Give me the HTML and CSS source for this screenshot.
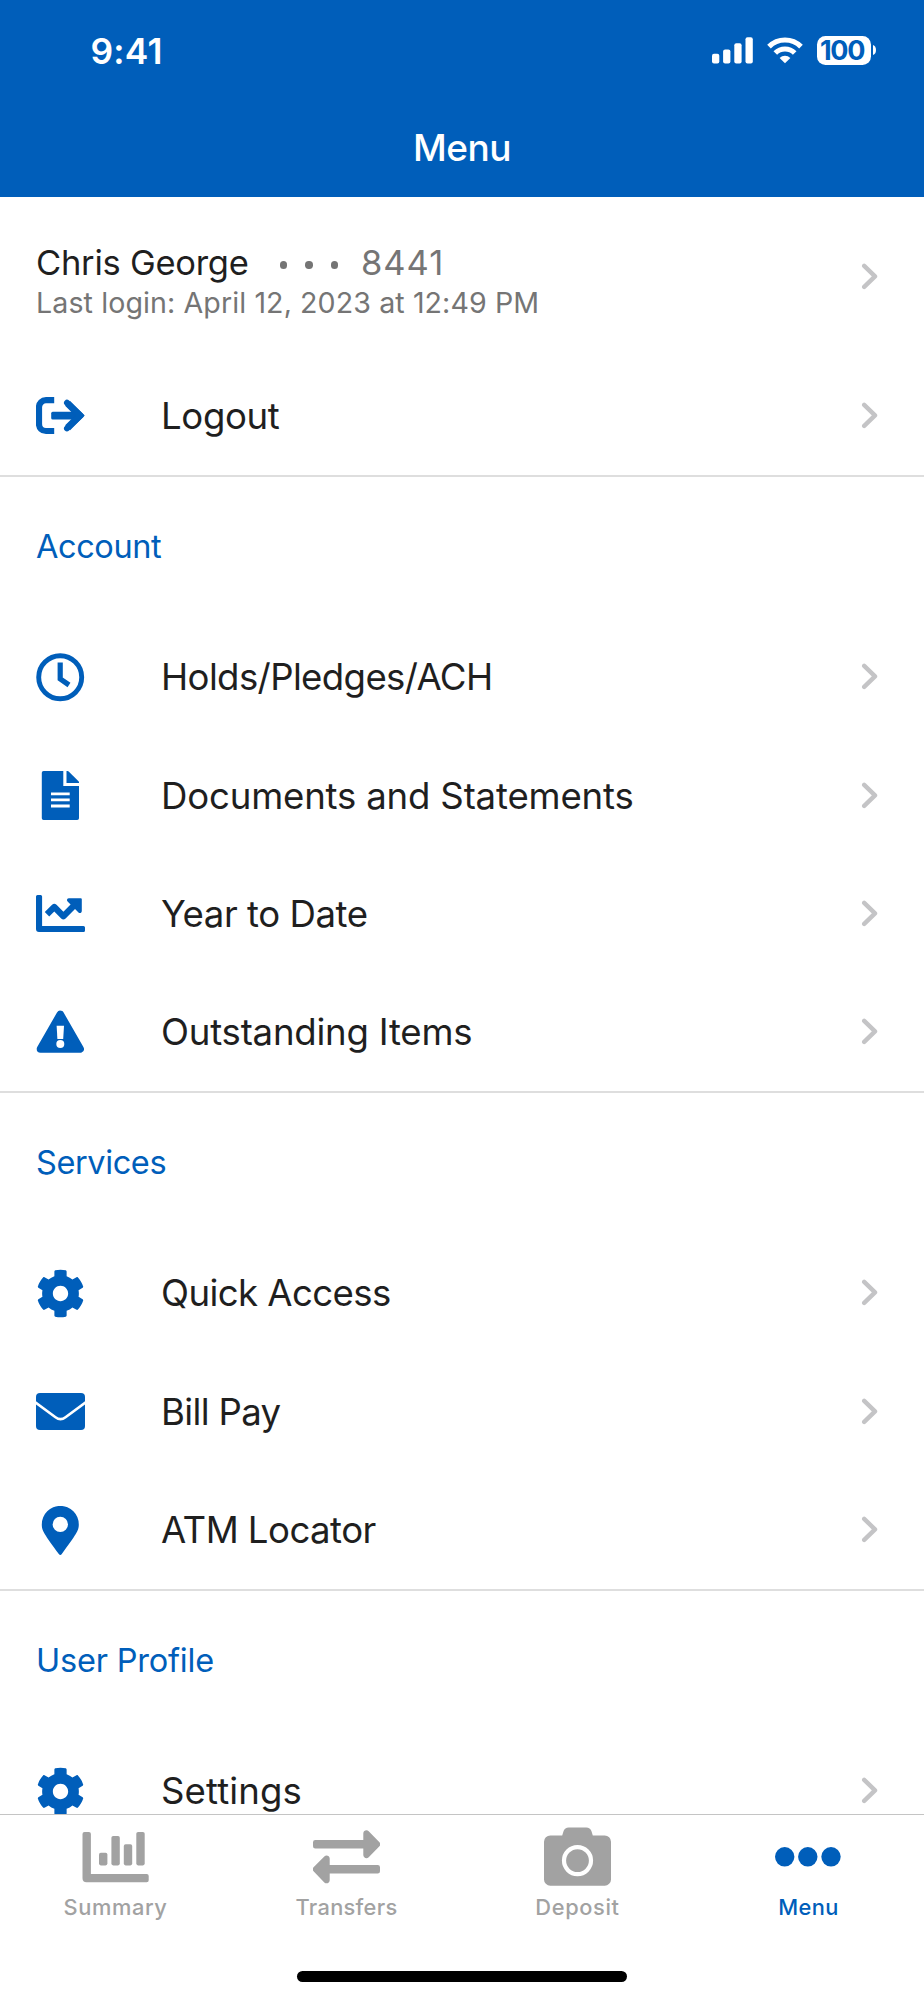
FILE: index.html
```html
<!DOCTYPE html>
<html lang="en">
<head>
<meta charset="utf-8">
<title>Menu</title>
<link rel="stylesheet" href="styles.css">
</head>
<body>
<svg class="defs" aria-hidden="true">
  <symbol id="chevron" viewBox="0 0 18 28"><path d="M3.2 2.9 14 13.4 3.2 23.9" fill="none" stroke="#c4c4c6" stroke-width="4.4" stroke-linecap="round" stroke-linejoin="round"/></symbol>
  <symbol id="gear" viewBox="0 0 512 512"><path fill="currentColor" d="M487.4 315.7l-42.6-24.6c4.3-23.2 4.3-47 0-70.2l42.6-24.6c4.9-2.8 7.1-8.6 5.5-14-11.1-35.6-30-67.8-54.7-94.6-3.8-4.1-10-5.1-14.8-2.3L380.8 110c-17.9-15.4-38.5-27.3-60.8-35.1V25.8c0-5.6-3.9-10.5-9.4-11.7-36.7-8.2-74.3-7.8-109.2 0-5.5 1.2-9.4 6.1-9.4 11.7V75c-22.2 7.9-42.8 19.8-60.8 35.1L88.7 85.5c-4.9-2.8-11-1.9-14.8 2.3-24.7 26.7-43.6 58.9-54.7 94.6-1.7 5.4.6 11.2 5.5 14L67.3 221c-4.3 23.2-4.3 47 0 70.2l-42.6 24.6c-4.9 2.8-7.1 8.6-5.5 14 11.1 35.6 30 67.8 54.7 94.6 3.8 4.1 10 5.1 14.8 2.3l42.6-24.6c17.9 15.4 38.5 27.3 60.8 35.1v49.2c0 5.6 3.9 10.5 9.4 11.7 36.7 8.2 74.3 7.8 109.2 0 5.5-1.2 9.4-6.1 9.4-11.7v-49.2c22.2-7.9 42.8-19.8 60.8-35.1l42.6 24.6c4.9 2.8 11 1.9 14.8-2.3 24.7-26.7 43.6-58.9 54.7-94.6 1.5-5.5-.7-11.3-5.6-14.1zM256 336c-44.1 0-80-35.9-80-80s35.9-80 80-80 80 35.9 80 80-35.9 80-80 80z"/></symbol>
</svg>
<div class="screen">
  <header class="header">
    <div class="status">
      <span class="time">9:41</span>
      <div class="indicators">
        <svg class="signal" viewBox="0 0 41 27" fill="#fff"><rect y="16.8" width="7.3" height="9.6" rx="2"/><rect x="11.1" y="12.4" width="7.3" height="14" rx="2"/><rect x="22.3" y="6.2" width="7.3" height="20.2" rx="2"/><rect x="33.5" y="0.2" width="7.3" height="26.2" rx="2"/></svg>
        <svg class="wifi" viewBox="0 0 36 27" fill="none" stroke="#fff" stroke-width="5.1"><path d="M2 9.6A22.6 22.6 0 0 1 34 9.6"/><path d="M8.3 16A13.7 13.7 0 0 1 27.7 16"/><path d="M18 26.3 12.6 20.9a8 8 0 0 1 10.8 0z" fill="#fff" stroke="none"/></svg>
        <span class="battery">100</span>
        <svg class="nub" viewBox="0 0 3 10"><path d="M0 0Q3 1.2 3 5T0 10Z" fill="#fff"/></svg>
      </div>
    </div>
    <h1 class="title">Menu</h1>
  </header>

  <main class="content">
    <section class="section">
      <div class="profile">
        <div class="identity">
          <div class="name-line"><span class="name">Chris George</span><span class="mask"><i class="dot"></i><i class="dot"></i><i class="dot"></i></span><span class="digits">8441</span></div>
          <div class="login">Last login: April 12, 2023 at 12:49 PM</div>
        </div>
        <svg class="chevron"><use href="#chevron"/></svg>
      </div>
      <div class="row">
        <svg class="icon" viewBox="0 0 49 49" fill="none" stroke="currentColor"><path d="M18.2 9.2H10a7 7 0 0 0-7 7v16.8a7 7 0 0 0 7 7h8.2" stroke-width="6.2"/><rect x="15.2" y="20.7" width="28" height="7.8" rx="1.5" fill="currentColor" stroke="none"/><path d="M31.6 12.4 43.8 24.6 31.6 36.8" stroke-width="7"/><path d="M31 11.8 44.6 24.6 31 37.4" stroke-width="6" stroke-linecap="round" stroke-linejoin="round"/></svg>
        <span class="label logout">Logout</span>
        <svg class="chevron"><use href="#chevron"/></svg>
      </div>
    </section>

    <section class="section">
      <h2 class="heading">Account</h2>
      <div class="row">
        <svg class="icon" viewBox="0 0 49 49" fill="none" stroke="currentColor"><circle cx="24.2" cy="24.3" r="21.5" stroke-width="4.9"/><path d="M24.2 9.6v16.4l8.8 6" stroke-width="5.2"/></svg>
        <span class="label holds">Holds/Pledges/ACH</span>
        <svg class="chevron"><use href="#chevron"/></svg>
      </div>
      <div class="row">
        <svg class="icon" viewBox="0 0 49 49" fill="currentColor"><path d="M7.6 0H27.3V15H43V47.2a1.8 1.8 0 0 1-1.8 1.8H7.6a1.8 1.8 0 0 1-1.8-1.8V1.8A1.8 1.8 0 0 1 7.6 0Z"/><path d="M30.5 0h1a1.8 1.8 0 0 1 1.2.5L42.5 10.3a1.8 1.8 0 0 1 .5 1.2v.5H30.5z"/><path d="M15 22.8H33.7M15 28.9H33.7M15 35H33.7" stroke="#fff" stroke-width="2.8"/></svg>
        <span class="label documents">Documents and Statements</span>
        <svg class="chevron"><use href="#chevron"/></svg>
      </div>
      <div class="row">
        <svg class="icon" viewBox="0 0 49 49" fill="currentColor"><path d="M1.5 6H4.6A1.5 1.5 0 0 1 6.1 7.5V36.9H47.5A1.5 1.5 0 0 1 49 38.4v3.1A1.5 1.5 0 0 1 47.5 43H3a3 3 0 0 1-3-3V7.5A1.5 1.5 0 0 1 1.5 6z"/><path d="M11 25.3 18.3 18 27.4 27.2 41 13.6" fill="none" stroke="currentColor" stroke-width="6.3" stroke-linejoin="round"/><path d="M33 9.2H44.8a1 1 0 0 1 1 1V22c0 2-2 2.7-3.3 1.4L31.6 12.5C30.3 11.2 31 9.2 33 9.2z"/></svg>
        <span class="label year">Year to Date</span>
        <svg class="chevron"><use href="#chevron"/></svg>
      </div>
      <div class="row">
        <svg class="icon" viewBox="0 0 49 49"><path d="M24.3 6.4 44.1 40.9H4.5z" fill="currentColor" stroke="currentColor" stroke-width="7.6" stroke-linejoin="round"/><path d="M20.6 17.7H28L27.2 31H21.4z" fill="#fff"/><circle cx="24.3" cy="36.1" r="4" fill="#fff"/></svg>
        <span class="label outstanding">Outstanding Items</span>
        <svg class="chevron"><use href="#chevron"/></svg>
      </div>
    </section>

    <section class="section">
      <h2 class="heading">Services</h2>
      <div class="row">
        <svg class="icon"><use href="#gear"/></svg>
        <span class="label quick">Quick Access</span>
        <svg class="chevron"><use href="#chevron"/></svg>
      </div>
      <div class="row">
        <svg class="icon" viewBox="0 0 49 49"><rect y="6" width="49" height="37" rx="4" fill="currentColor"/><path d="M-1 15.2 19.5 30.2Q24.5 34 29.5 30.2L50 15.2" fill="none" stroke="#fff" stroke-width="2.6"/></svg>
        <span class="label tight">Bill Pay</span>
        <svg class="chevron"><use href="#chevron"/></svg>
      </div>
      <div class="row">
        <svg class="icon" viewBox="0 0 49 49"><path d="M22.8 48C8.5 27.8 5.8 25.2 5.8 18.4a18.5 18.5 0 0 1 37 0C42.8 25.2 40.1 27.8 25.8 48a1.9 1.9 0 0 1-3 0z" fill="currentColor"/><circle cx="24.3" cy="18.4" r="7.7" fill="#fff"/></svg>
        <span class="label atm">ATM Locator</span>
        <svg class="chevron"><use href="#chevron"/></svg>
      </div>
    </section>

    <section class="section">
      <h2 class="heading profile-heading">User Profile</h2>
      <div class="row">
        <svg class="icon"><use href="#gear"/></svg>
        <span class="label settings">Settings</span>
        <svg class="chevron"><use href="#chevron"/></svg>
      </div>
    </section>
  </main>

  <footer class="footer">
    <nav class="tabs">
      <a class="tab"><svg class="tab-icon" viewBox="0 0 67 59" fill="currentColor"><path d="M2.5 5H6.9A2 2 0 0 1 8.9 7V47H64.7a2 2 0 0 1 2 2v4.3a2 2 0 0 1-2 2H4.5a4 4 0 0 1-4-4V7A2 2 0 0 1 2.5 5z"/><rect x="17" y="25.7" width="8.4" height="12.7" rx="1.8"/><rect x="29.4" y="9" width="8.4" height="29.4" rx="1.8"/><rect x="41.8" y="17.3" width="8.4" height="21.1" rx="1.8"/><rect x="54.3" y="5" width="8.4" height="33.4" rx="1.8"/></svg><span class="tab-label summary">Summary</span></a>
      <a class="tab"><svg class="tab-icon" viewBox="0 0 67 59" fill="currentColor"><path id="arrow" d="M2.3 13H50.3V6.4C50.3 3.6 53.7 2.2 55.7 4.2L66.2 15.1A3 3 0 0 1 66.2 19.5L55.7 30.2C53.7 32.2 50.3 30.8 50.3 28V21.6H2.3A2.3 2.3 0 0 1 0 19.3V15.3A2.3 2.3 0 0 1 2.3 13z"/><use href="#arrow" transform="rotate(180 33.5 29.8)"/></svg><span class="tab-label transfers">Transfers</span></a>
      <a class="tab"><svg class="tab-icon" viewBox="0 0 67 59"><path d="M6.3 8.4H18.2L19.6 4A5.4 5.4 0 0 1 24.7.4H42.3A5.4 5.4 0 0 1 47.4 4L48.8 8.4H60.7A6.3 6.3 0 0 1 67 14.7V52.4A6.3 6.3 0 0 1 60.7 58.7H6.3A6.3 6.3 0 0 1 0 52.4V14.7A6.3 6.3 0 0 1 6.3 8.4z" fill="currentColor"/><circle cx="33.5" cy="33.6" r="13.5" fill="none" stroke="#fff" stroke-width="4.2"/></svg><span class="tab-label deposit">Deposit</span></a>
      <a class="tab active"><svg class="tab-icon" viewBox="0 0 67 59" fill="currentColor"><circle cx="9.7" cy="29.8" r="9.7"/><circle cx="32.8" cy="29.8" r="9.7"/><circle cx="56" cy="29.8" r="9.7"/></svg><span class="tab-label menu">Menu</span></a>
    </nav>
    <div class="home"></div>
  </footer>
</div>
</body>
</html>
```

FILE: styles.css
```css
* { box-sizing: border-box; }
body { margin: 0; background: #fff; font-family: Inter, "Liberation Sans", sans-serif; color: #1f1f1f; }
.defs { display: none; }
.screen { width: 924px; height: 2000px; display: flex; flex-direction: column; overflow: hidden; }

.header { flex: none; height: 196.6px; padding-top: 30.3px; background: #005eba; color: #fff; }
.status { display: flex; justify-content: space-between; height: 40px; padding: 0 48.5px 0 90.5px; }
.time { padding-top: 1.5px; font-size: 35.4px; font-weight: 600; line-height: 40px; letter-spacing: 0.2px; }
.indicators { display: flex; height: 40px; align-items: center; }
.signal { width: 41px; height: 27px; }
.wifi { width: 36px; height: 27px; margin-left: 14.5px; }
.battery { width: 54px; height: 29.4px; margin-left: 13.5px; border-radius: 8.5px; background: #fff; color: #005eba; font-size: 27px; font-weight: 700; line-height: 29.4px; letter-spacing: -1.2px; padding-left: 3.4px; }
.nub { width: 3px; height: 10px; margin-left: 2px; }
.title { margin: 56px 0 0; text-align: center; font-size: 37px; font-weight: 500; line-height: 44px; letter-spacing: -0.5px; }

.content { flex: 1; min-height: 0; overflow: hidden; }
.section { border-bottom: 2px solid #dedede; }
.profile { display: flex; justify-content: space-between; align-items: center; height: 160.2px; padding: 0 45px 0 36px; }
.identity { height: 68px; }
.name-line { display: flex; align-items: center; height: 40px; font-size: 34.5px; line-height: 40px; letter-spacing: -0.25px; }
.mask { display: flex; gap: 18.3px; padding: 5px 0 0 31px; }
.dot { width: 7.4px; height: 7.4px; border-radius: 50%; background: #757575; }
.digits { margin-left: 22.5px; color: #757575; letter-spacing: 1px; }
.login { margin-top: 3px; color: #757575; font-size: 28.6px; line-height: 34px; letter-spacing: 0.09px; }

.row { display: flex; align-items: center; height: 118.3px; padding: 0 45px 0 36px; }
.icon { flex: none; width: 49px; height: 49px; color: #005eba; }
.label { flex: 1; margin-left: 76px; font-size: 36.6px; line-height: 44px; white-space: nowrap; }
.chevron { flex: none; width: 18px; height: 28px; }
.logout { letter-spacing: -0.36px; }
.holds { letter-spacing: -0.62px; }
.documents { letter-spacing: -0.18px; }
.year { letter-spacing: -0.45px; }
.quick { letter-spacing: -0.57px; }
.outstanding { letter-spacing: -0.22px; }
.tight { letter-spacing: -0.65px; }
.atm { letter-spacing: -0.55px; }
.settings { letter-spacing: 0.12px; }
.heading { height: 141px; margin: 0; padding: 50px 36px 0; color: #005eba; font-size: 32.5px; font-weight: 400; line-height: 40px; letter-spacing: -0.4px; }
.profile-heading { letter-spacing: -0.2px; }

.footer { flex: none; height: 186px; border-top: 1px solid #c4c4c4; background: #fff; }
.tabs { display: flex; height: 156px; padding-top: 12px; }
.tab { flex: 1; display: flex; flex-direction: column; align-items: center; color: #a2a2a2; }
.active { color: #005eba; }
.tab-icon { width: 67px; height: 59px; }
.tab-label { margin-top: 8px; font-size: 21.8px; font-weight: 500; line-height: 26px; }
.summary { letter-spacing: 0.6px; }
.transfers { letter-spacing: 0.3px; }
.deposit { letter-spacing: 0.65px; }
.menu { letter-spacing: 0.4px; }
.home { width: 330px; height: 11px; margin: 0 auto; border-radius: 6px; background: #000; }
```
